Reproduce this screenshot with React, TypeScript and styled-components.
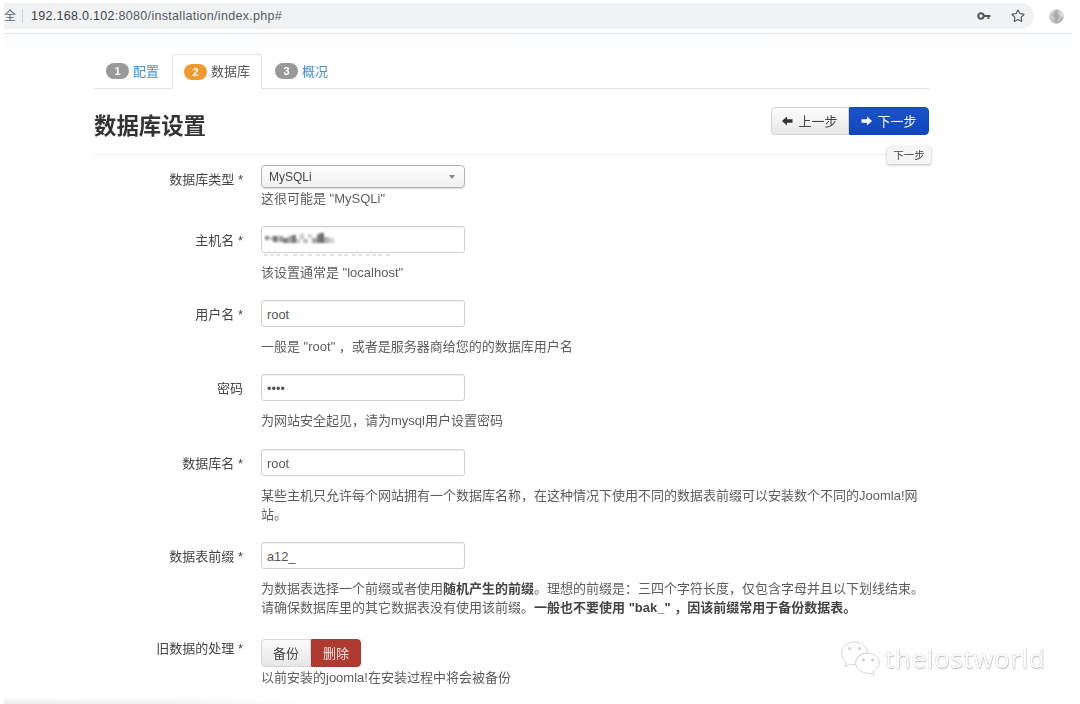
import { FC, ReactNode } from 'react';
import styled, { createGlobalStyle } from 'styled-components';
import { Star } from 'lucide-react';

const GlobalStyle = createGlobalStyle`
  html, body {
    margin: 0;
    padding: 0;
    height: 100%;
    background: #fff;
    overflow: hidden;
  }
  body {
    font-family: "Liberation Sans", "Noto Sans CJK SC", sans-serif;
    font-size: 13px;
    color: #333;
  }
`;

const Page = styled.div`
  position: relative;
  width: 1080px;
  height: 704px;
  overflow: hidden;
  filter: blur(0.35px);
`;

const BrowserBar = styled.div`
  display: flex;
  align-items: center;
  height: 34px;
  margin: 0 8px 0 4px;
  padding-top: 3px;
  box-sizing: border-box;
  border-bottom: 1px solid #e3e5e8;
`;

const Omnibox = styled.div`
  flex: 1;
  display: flex;
  align-items: center;
  height: 26px;
  margin-bottom: 4px;
  background: #f1f2f4;
  border-radius: 0 13px 13px 0;
  font-size: 12.5px;
  color: #44474b;
`;

const Secure = styled.span`
  width: 19px;
  font-size: 12px;
  color: #5f6368;
  border-right: 1px solid #cfd1d4;
  line-height: 14px;
  margin-right: 8px;
  box-sizing: border-box;
`;

const Url = styled.span`
  flex: 1;
  color: #3e4144;
  letter-spacing: 0.3px;

  > em {
    font-style: normal;
    color: #55585c;
  }
`;

const BarIcon = styled.span<{ $gap: number }>`
  display: flex;
  align-items: center;
  justify-content: center;
  width: 20px;
  color: #55585c;
  margin-right: ${(p) => p.$gap}px;
`;

const Avatar = styled.span`
  display: flex;
  margin: 0 8px 4px 15px;
`;

const Tint = styled.div`
  height: 16px;
  margin: 0 8px 0 4px;
  background: linear-gradient(#fbfcfe, #fff);
`;

const Container = styled.main`
  width: 835px;
  margin: 4px 0 0 94px;
`;

const Tabs = styled.nav`
  display: flex;
  align-items: flex-end;
  gap: 1px;
  height: 34px;
  border-bottom: 1px solid #e2e2e2;
`;

const Tab = styled.a<{ $active?: boolean }>`
  display: flex;
  align-items: center;
  gap: 4px;
  box-sizing: border-box;
  height: ${(p) => (p.$active ? '35px' : '34px')};
  margin-bottom: ${(p) => (p.$active ? '-1px' : '0')};
  padding: 0 11px 2px;
  font-size: 13px;
  color: ${(p) => (p.$active ? '#555' : '#3f8fcf')};
  background: ${(p) => (p.$active ? '#fff' : 'transparent')};
  border: 1px solid ${(p) => (p.$active ? '#e4e4e4' : 'transparent')};
  border-bottom-color: ${(p) => (p.$active ? '#fff' : 'transparent')};
  border-radius: 4px 4px 0 0;
`;

const Badge = styled.span<{ $active?: boolean }>`
  display: inline-block;
  width: 23px;
  height: 16px;
  margin-top: 2px;
  line-height: 16px;
  text-align: center;
  font-size: 11px;
  font-weight: 700;
  color: #fff;
  border-radius: 8px;
  background: ${(p) => (p.$active ? '#ee9a32' : '#999')};
`;

const Header = styled.header`
  display: flex;
  align-items: flex-start;
  justify-content: space-between;
  height: 66px;
  padding-top: 18px;
  box-sizing: border-box;
  border-bottom: 1px solid #ececec;
`;

const Title = styled.h1`
  margin: 0;
  font-size: 22.4px;
  line-height: 39px;
  font-weight: 700;
  color: #333;
`;

const StepGroup = styled.div`
  position: relative;
  display: flex;
  height: 28px;
`;

const StepButton = styled.button<{ $primary?: boolean }>`
  display: flex;
  align-items: center;
  justify-content: center;
  gap: 5px;
  width: ${(p) => (p.$primary ? '80px' : '78px')};
  height: 28px;
  padding: 0 0 2px;
  font: inherit;
  font-size: 13px;
  color: ${(p) => (p.$primary ? '#fff' : '#444')};
  background: ${(p) =>
    p.$primary ? 'linear-gradient(#1b52c8, #1147bd)' : 'linear-gradient(#fcfcfc, #e8e8e8)'};
  border: 1px solid ${(p) => (p.$primary ? '#1147bd' : '#d4d4d4')};
  border-radius: ${(p) => (p.$primary ? '0 4px 4px 0' : '4px 0 0 4px')};

  > svg {
    margin-top: 2px;
  }
`;

const Tooltip = styled.span`
  position: absolute;
  top: 39px;
  right: -2px;
  width: 44px;
  height: 18px;
  line-height: 18px;
  text-align: center;
  font-size: 10.5px;
  color: #444;
  background: #f5f5f5;
  box-shadow: 0 1px 3px rgba(0, 0, 0, 0.28);
  border-radius: 2px;
`;

const Form = styled.form`
  padding-top: 10px;
`;

const Row = styled.div<{ $gap: number }>`
  display: grid;
  grid-template-columns: 149px 1fr;
  column-gap: 18px;
  margin-bottom: ${(p) => p.$gap}px;
`;

const Label = styled.label<{ $high?: boolean }>`
  text-align: right;
  font-size: 13px;
  line-height: ${(p) => (p.$high ? '19px' : '29px')};
  color: #444;
`;

const Field = styled.div`
  min-width: 0;
`;

const InputBox = styled.div`
  position: relative;
  box-sizing: border-box;
  width: 204px;
  height: 27px;
  padding: 1px 5px 0;
  line-height: 25px;
  font-size: 12.8px;
  color: #555;
  background: #fff;
  border: 1px solid #d0d0d0;
  border-radius: 3px;
  box-shadow: inset 0 1px 1px rgba(0, 0, 0, 0.06);
`;

const SelectBox = styled.div`
  display: flex;
  align-items: center;
  justify-content: space-between;
  box-sizing: border-box;
  width: 204px;
  height: 23px;
  padding: 1px 9px 0 7px;
  font-size: 12px;
  color: #444;
  background: linear-gradient(#fff, #f0f0f0);
  border: 1px solid #b4b4b4;
  border-radius: 4px;
  box-shadow: 0 1px 1px rgba(0, 0, 0, 0.15);

  &::after {
    content: '';
    border-left: 3px solid transparent;
    border-right: 3px solid transparent;
    border-top: 4px solid #888;
  }
`;

const Help = styled.p<{ $tight?: boolean }>`
  margin: ${(p) => (p.$tight ? '1px 0 0' : '10px 0 0')};
  font-size: 13px;
  line-height: 19px;
  color: #5c5c5c;
  white-space: nowrap;

  > b {
    color: #444;
  }
`;

const Mosaic = styled.svg`
  position: absolute;
  left: 3px;
  top: 5px;
  filter: blur(0.8px);
`;

const Smear = styled.svg`
  position: absolute;
  left: 0;
  top: 27px;
  filter: blur(0.5px);
`;

const Toggle = styled.div`
  display: flex;
  width: 100px;
  height: 28px;
`;

const ToggleButton = styled.button<{ $danger?: boolean }>`
  width: 50px;
  height: 28px;
  padding: 0 0 1px;
  font: inherit;
  font-size: 13px;
  color: ${(p) => (p.$danger ? '#f5e3e0' : '#444')};
  background: ${(p) => (p.$danger ? '#ad3b32' : 'linear-gradient(#fbfbfb, #e6e6e6)')};
  border: 1px solid ${(p) => (p.$danger ? '#a63930' : '#d6d6d6')};
  border-radius: ${(p) => (p.$danger ? '0 4px 4px 0' : '4px 0 0 4px')};
`;

const Watermark = styled.div`
  position: absolute;
  left: 840px;
  top: 638px;
  display: flex;
  align-items: center;
  gap: 4px;
  font-family: "Open Sans", "Liberation Sans", sans-serif;
  font-size: 26.3px;
  line-height: 40px;
  letter-spacing: 0.5px;
  color: #fff;
  text-shadow: 0 0 1px #a0a0a0, 0.5px 0.5px 1px #c0c0c0;
`;

const BottomShade = styled.div`
  position: absolute;
  left: 4px;
  bottom: 0;
  width: 300px;
  height: 7px;
  background: linear-gradient(90deg, #ebebeb, #f1f1f1 60%, #fff);
  mask-image: linear-gradient(transparent, #000);
`;

const ArrowLeft: FC<{ color: string }> = ({ color }) => (
  <svg width="11" height="10" viewBox="0 0 11 10">
    <path d="M0 5 L5 0.5 V3.2 H10.5 V6.8 H5 V9.5 Z" fill={color} />
  </svg>
);

const ArrowRight: FC<{ color: string }> = ({ color }) => (
  <svg width="11" height="10" viewBox="0 0 11 10">
    <path d="M11 5 L6 0.5 V3.2 H0.5 V6.8 H6 V9.5 Z" fill={color} />
  </svg>
);

const KeyIcon = () => (
  <svg width="14" height="8" viewBox="0 0 14 8">
    <circle cx="4" cy="4" r="2.7" fill="none" stroke="#55585c" strokeWidth="2" />
    <path d="M6.5 3 H13.5 V5 H12.3 V7 H10.5 V5 H6.5 Z" fill="#55585c" />
  </svg>
);

const GlobeIcon = () => (
  <svg width="15" height="15" viewBox="0 0 15 15">
    <defs>
      <radialGradient id="globe" cx="0.4" cy="0.35" r="0.75">
        <stop offset="0" stopColor="#e9e9e9" />
        <stop offset="1" stopColor="#a4a4a4" />
      </radialGradient>
    </defs>
    <circle cx="7.5" cy="7.5" r="7.2" fill="url(#globe)" />
    <path d="M7 0.6 C9.5 2 8 4 9.5 5.5 C11 6.5 10 9 8.5 10 C8 12 7.5 13.5 7 14.4 C6 12 6.5 9 4.5 8 C3 7 3 5 4.5 4 C6 3.5 6 2 7 0.6 Z" fill="#8d8d8d" opacity="0.6" />
    <path d="M11 2 C13 3 14.5 6 14 9 C13 8 11.5 6 11.8 4.5 Z" fill="#f1f1f1" opacity="0.8" />
  </svg>
);

const WeChatIcon = () => (
  <svg width="41" height="34" viewBox="0 0 42 36" fill="#fff" stroke="#d2d2d2" strokeWidth="1">
    <path d="M15 1 C7 1 1 6 1 13 C1 17 3 20 6 22 L4.5 27 L10.5 24.5 C12 25 14 25.2 16 25 C15 19 19 13 29 12.5 C27.5 6 22 1 15 1 Z" />
    <path d="M29 13 C21.5 13 16 17.5 16 23.5 C16 29.5 21.5 34 29 34 L35 35.5 L34.5 31.5 C38 29.5 41 27 41 23.5 C41 17.5 36 13 29 13 Z" />
    <circle cx="9.5" cy="8" r="1.3" fill="#d4d4d4" />
    <circle cx="20" cy="8" r="1.3" fill="#d4d4d4" />
    <circle cx="24" cy="20" r="1.3" fill="#d4d4d4" />
    <circle cx="34" cy="20" r="1.3" fill="#d4d4d4" />
  </svg>
);

const mosaicCells: [number, number, number, number, string][] = [
  [0, 4, 4, 4, '#8d8d8d'], [5, 5, 3, 3, '#b5b5b5'], [8, 4, 5, 6, '#777'], [14, 4, 4, 6, '#999'],
  [18, 6, 5, 5, '#808080'], [23, 4, 4, 7, '#a8a8a8'], [27, 3, 4, 8, '#777'], [31, 7, 4, 4, '#c5c5c5'],
  [35, 2, 4, 5, '#c4c4c4'], [38, 7, 5, 4, '#bcbcbc'], [43, 2, 4, 4, '#d0d0d0'], [47, 6, 5, 5, '#a0a0a0'],
  [52, 2, 3, 9, '#808080'], [55, 1, 4, 10, '#6a6a6a'], [59, 5, 5, 6, '#b0b0b0'], [64, 6, 5, 5, '#cfcfcf'],
];

const smearCells = [2, 8, 14, 22, 31, 38, 46, 54, 60, 68, 76, 82, 90, 96, 104, 110, 116, 124];

type FormRowProps = {
  label: string;
  gap?: number;
  highLabel?: boolean;
  children: ReactNode;
};

const FormRow: FC<FormRowProps> = ({ label, gap = 18, highLabel, children }) => (
  <Row $gap={gap}>
    <Label $high={highLabel}>{label}</Label>
    <Field>{children}</Field>
  </Row>
);

export default function App() {
  return (
    <>
      <GlobalStyle />
      <Page>
        <BrowserBar>
          <Omnibox>
            <Secure>全</Secure>
            <Url>
              192.168.0.102<em>:8080/installation/index.php#</em>
            </Url>
            <BarIcon $gap={14}>
              <KeyIcon />
            </BarIcon>
            <BarIcon $gap={6}>
              <Star size={14} strokeWidth={2} />
            </BarIcon>
          </Omnibox>
          <Avatar>
            <GlobeIcon />
          </Avatar>
        </BrowserBar>
        <Tint />
        <Container>
          <Tabs>
            <Tab>
              <Badge>1</Badge>配置
            </Tab>
            <Tab $active>
              <Badge $active>2</Badge>数据库
            </Tab>
            <Tab>
              <Badge>3</Badge>概况
            </Tab>
          </Tabs>
          <Header>
            <Title>数据库设置</Title>
            <StepGroup>
              <StepButton type="button">
                <ArrowLeft color="#333" />
                上一步
              </StepButton>
              <StepButton type="button" $primary>
                <ArrowRight color="#fff" />
                下一步
              </StepButton>
              <Tooltip>下一步</Tooltip>
            </StepGroup>
          </Header>
          <Form>
            <FormRow label="数据库类型 *">
              <SelectBox>MySQLi</SelectBox>
              <Help $tight>这很可能是 "MySQLi"</Help>
            </FormRow>
            <FormRow label="主机名 *">
              <InputBox>
                <Mosaic width="70" height="14" viewBox="0 0 70 14">
                  {mosaicCells.map(([x, y, w, h, fill]) => (
                    <rect key={`${x}-${y}`} x={x} y={y} width={w} height={h} fill={fill} />
                  ))}
                </Mosaic>
                <Smear width="134" height="3" viewBox="0 0 134 3">
                  {smearCells.map((x) => (
                    <rect key={x} x={x} y="0" width="4" height="2" fill="#e4e4e4" />
                  ))}
                </Smear>
              </InputBox>
              <Help>该设置通常是 "localhost"</Help>
            </FormRow>
            <FormRow label="用户名 *">
              <InputBox>root</InputBox>
              <Help>一般是 "root" ，或者是服务器商给您的的数据库用户名</Help>
            </FormRow>
            <FormRow label="密码" gap={19}>
              <InputBox>••••</InputBox>
              <Help>为网站安全起见，请为mysql用户设置密码</Help>
            </FormRow>
            <FormRow label="数据库名 *">
              <InputBox>root</InputBox>
              <Help>
                某些主机只允许每个网站拥有一个数据库名称，在这种情况下使用不同的数据表前缀可以安装数个不同的Joomla!网
                <br />
                站。
              </Help>
            </FormRow>
            <FormRow label="数据表前缀 *" gap={22}>
              <InputBox>a12_</InputBox>
              <Help>
                为数据表选择一个前缀或者使用<b>随机产生的前缀</b>。理想的前缀是：三四个字符长度，仅包含字母并且以下划线结束。
                <br />
                请确保数据库里的其它数据表没有使用该前缀。
                <b>一般也不要使用 "bak_" ，因该前缀常用于备份数据表。</b>
              </Help>
            </FormRow>
            <FormRow label="旧数据的处理 *" highLabel>
              <Toggle>
                <ToggleButton type="button">备份</ToggleButton>
                <ToggleButton type="button" $danger>
                  删除
                </ToggleButton>
              </Toggle>
              <Help $tight>以前安装的joomla!在安装过程中将会被备份</Help>
            </FormRow>
          </Form>
        </Container>
        <Watermark>
          <WeChatIcon />
          thelostworld
        </Watermark>
        <BottomShade />
      </Page>
    </>
  );
}
